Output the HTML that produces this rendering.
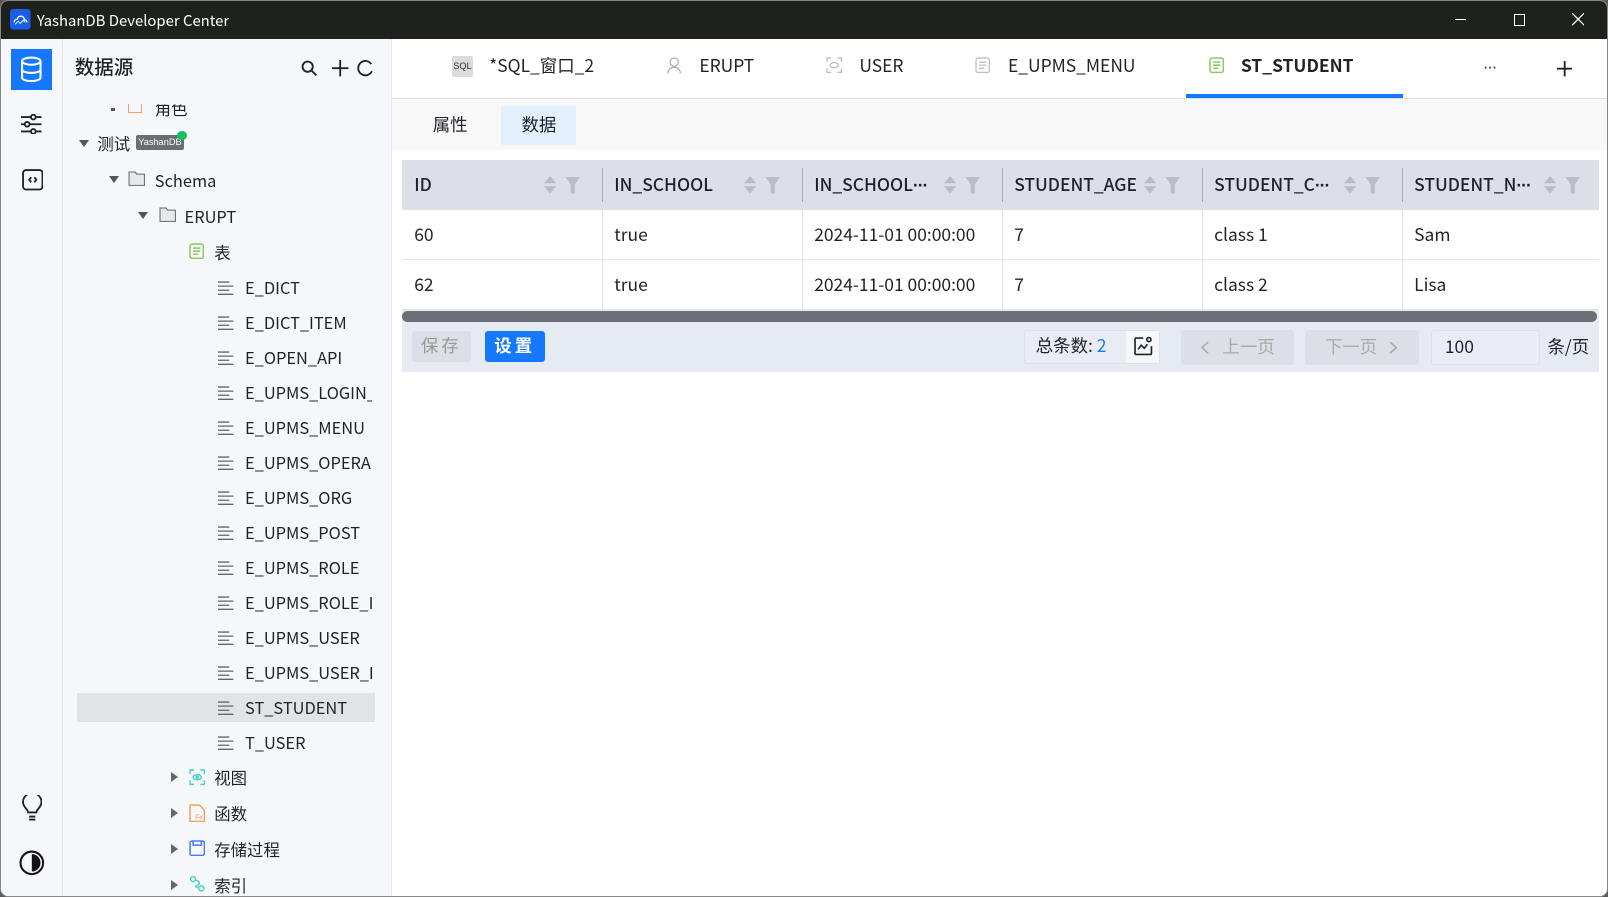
<!DOCTYPE html>
<html><head><meta charset="utf-8">
<style>
html{zoom:1.02551}
*{box-sizing:border-box;margin:0;padding:0}
body{width:1568px;height:875px;overflow:hidden;background:#5a5a5a;font-family:"Noto Sans CJK SC","Liberation Sans",sans-serif;color:#1f2329;position:relative}
.win{position:absolute;left:0;top:0;width:1568px;height:875px;background:#fff;border-radius:8px;overflow:hidden;border:1px solid #888}
.title{position:absolute;left:0;top:0;width:100%;height:37px;background:#1f211c;color:#fff;font-size:14.5px}
.abs{position:absolute}
.act{position:absolute;left:0;top:37px;width:60px;bottom:0;background:#f5f7fb;border-right:1px solid #e3e6eb}
.side{position:absolute;left:60px;top:37px;width:321px;bottom:0;background:#f5f7fb;border-right:1px solid #e3e6eb}
.t{position:absolute;font-size:16px;line-height:20px;white-space:nowrap;color:#1f2329}
.arr{position:absolute;width:0;height:0;border-left:5px solid transparent;border-right:5px solid transparent;border-top:7px solid #555}
.arrr{position:absolute;width:0;height:0;border-top:5px solid transparent;border-bottom:5px solid transparent;border-left:7px solid #666}
.main{position:absolute;left:381px;top:37px;right:0;bottom:0;background:#fff}
.tab{position:absolute;top:17px;font-size:17px;line-height:20px;color:#1f2329;white-space:nowrap}
.th{position:absolute;top:0;height:49px;line-height:49px;font-size:17px;padding-left:12px;font-weight:500;white-space:nowrap}
.td{position:absolute;height:48px;line-height:48px;font-size:17px;padding-left:12px}
.btn{position:absolute;font-size:17px;text-align:center;border-radius:3px}
.dots{font-family:"Liberation Sans",sans-serif;letter-spacing:-1px;font-weight:700}
</style></head><body>
<div class="win">
<div class="title">
 <svg class="abs" style="left:9px;top:8px" width="20" height="20" viewBox="0 0 20 20"><rect width="20" height="20" rx="3" fill="#1a5ee8"/><path d="M4 13c0-2 1.5-3 3-3 .5-2 2-3 3.5-3 2 0 3.5 1.5 3.5 3.5 1.3 0 2.5 1 2.5 2.5" stroke="#fff" stroke-width="1.3" fill="none"/><path d="M5 15l3-3 2 2 3-3 2 2" stroke="#cfe" stroke-width="1" fill="none"/></svg>
 <div class="abs" style="left:35px;top:9px">YashanDB Developer Center</div>
 <div class="abs" style="left:1418px;top:18px;width:11px;height:1px;background:#fff"></div>
 <div class="abs" style="left:1475px;top:13px;width:11px;height:11px;border:1px solid #fff"></div>
 <svg class="abs" style="left:1532px;top:12px" width="12" height="12"><path d="M0 0L12 12M12 0L0 12" stroke="#fff" stroke-width="1.2"/></svg>
</div>
<div class="act">
 <div class="abs" style="left:10px;top:10px;width:40px;height:40px;background:#1677ff"></div>
 <svg class="abs" style="left:18px;top:17px" width="24" height="26" viewBox="0 0 24 26" fill="none" stroke="#fff" stroke-width="2"><ellipse cx="12" cy="5" rx="9" ry="3.5"/><path d="M3 5v16c0 2 4 3.5 9 3.5s9-1.5 9-3.5V5M3 13c0 2 4 3.5 9 3.5s9-1.5 9-3.5"/></svg>
 <svg class="abs" style="left:19px;top:73px" width="22" height="20" viewBox="0 0 22 20" fill="none" stroke="#222" stroke-width="1.8"><path d="M1 3h20M1 10h20M1 17h20"/><circle cx="13" cy="3" r="2.3" fill="#f5f7fb"/><circle cx="7" cy="10" r="2.3" fill="#f5f7fb"/><circle cx="13" cy="17" r="2.3" fill="#f5f7fb"/></svg>
 <svg class="abs" style="left:20px;top:127px" width="21" height="21" viewBox="0 0 21 21" fill="none" stroke="#222" stroke-width="1.8"><rect x="1" y="1" width="19" height="19" rx="3"/><path d="M9 8l-2 2.5 2 2.5M12 8l2 2.5-2 2.5"/></svg>
 <svg class="abs" style="left:20px;top:737px" width="20" height="26" viewBox="0 0 20 26" fill="none" stroke="#222" stroke-width="1.8"><path d="M6 17c0-3-5-5-5-10a9 9 0 0118 0c0 5-5 7-5 10z"/><path d="M7 21h6M7 24h6"/></svg>
 <svg class="abs" style="left:18px;top:791px" width="25" height="25" viewBox="0 0 25 25"><circle cx="12.5" cy="12.5" r="11" fill="none" stroke="#111" stroke-width="2"/><path d="M12.5 4a8.5 8.5 0 010 17z" fill="#111"/></svg>
</div>
<div class="side">
 <div class="t" style="left:12px;top:15px;font-size:19px;line-height:24px;font-weight:500">数据源</div>
 <svg class="abs" style="left:233px;top:21px" width="16" height="16" fill="none" stroke="#222" stroke-width="1.8"><circle cx="6.5" cy="6.5" r="5"/><path d="M10 10l5 5"/></svg>
 <svg class="abs" style="left:263px;top:21px" width="16" height="16" stroke="#222" stroke-width="1.8"><path d="M8 0v16M0 8h16"/></svg>
 <svg class="abs" style="left:287px;top:21px" width="16" height="16" fill="none" stroke="#222" stroke-width="1.8"><path d="M14 4A7 7 0 1014.5 11"/></svg>
 <div class="abs" style="left:47px;top:67px;width:4px;height:3px;background:#555"></div>
 <div class="abs" style="left:64px;top:63px;width:14px;height:9px;border:1.5px solid #f0a060;border-top:none"></div>
 <div class="t" style="left:90px;top:58px;clip-path:inset(6px 0 0 0)">角色</div>
 <div class="arr" style="left:16px;top:99px"></div>
 <div class="t" style="left:34px;top:92px">测试</div>
 <div class="abs" style="left:72px;top:94px;width:46px;height:14px;background:#6b6e73;border-radius:2px;color:#fff;font-size:9px;line-height:14px;text-align:center;font-family:'Liberation Sans',sans-serif">YashanDB</div>
 <div class="abs" style="left:112px;top:90px;width:9px;height:9px;background:#18c05a;border-radius:50%"></div>
 <div class="arr" style="left:45px;top:134px"></div>
 <svg class="abs" style="left:64px;top:129px" width="17" height="15"><path d="M1 1h6l1.5 2H16v11H1z" fill="#e6e8ec" stroke="#666" stroke-width="1"/></svg>
 <div class="t" style="left:90px;top:128px">Schema</div>
 <div class="arr" style="left:74px;top:169px"></div>
 <svg class="abs" style="left:94px;top:164px" width="17" height="15"><path d="M1 1h6l1.5 2H16v11H1z" fill="#e6e8ec" stroke="#666" stroke-width="1"/></svg>
 <div class="t" style="left:119px;top:163px">ERUPT</div>
 <svg class="abs" style="left:123px;top:199px" width="15" height="16" fill="none" stroke="#8cc860" stroke-width="1.5"><rect x="1" y="1" width="13" height="14" rx="2"/><path d="M4 5h7M4 8h7M4 11h5"/></svg>
 <div class="t" style="left:148px;top:198px">表</div>
 <div class="abs" style="left:14px;top:638px;width:291px;height:28px;background:#e1e3e7"></div>
 <div id="tbls"></div>
 <div class="arrr" style="left:106px;top:715px"></div>
 <svg class="abs" style="left:123px;top:712px" width="16" height="16" fill="none" stroke="#4dd0c8" stroke-width="1.4"><path d="M1 5V1h4M11 1h4v4M15 11v4h-4M5 15H1v-4"/><ellipse cx="8" cy="8" rx="4" ry="2.5"/><circle cx="8" cy="8" r="1" fill="#4dd0c8"/></svg>
 <div class="t" style="left:148px;top:710px">视图</div>
 <div class="arrr" style="left:106px;top:750px"></div>
 <svg class="abs" style="left:123px;top:746px" width="17" height="18" fill="none" stroke="#f0a060" stroke-width="1.4"><path d="M1 1h9l5 5v11H1z"/><text x="6" y="15" font-size="7" fill="#f0a060" stroke="none" font-family="Liberation Sans">Fx</text></svg>
 <div class="t" style="left:148px;top:745px">函数</div>
 <div class="arrr" style="left:106px;top:785px"></div>
 <svg class="abs" style="left:123px;top:781px" width="16" height="16" fill="none" stroke="#4a7cf0" stroke-width="1.5"><rect x="1" y="1" width="14" height="14" rx="2"/><path d="M4 1v4h8V1"/></svg>
 <div class="t" style="left:148px;top:780px">存储过程</div>
 <div class="arrr" style="left:106px;top:820px"></div>
 <svg class="abs" style="left:123px;top:815px" width="16" height="17" fill="none" stroke="#4dd0c8" stroke-width="1.4"><circle cx="4" cy="4" r="2.5"/><circle cx="12" cy="13" r="2.5"/><path d="M6 5c5 1 5 4 2 5s-2 2 2 2"/></svg>
 <div class="t" style="left:148px;top:815px">索引</div>
</div>
<div class="main">
 <div class="abs" style="left:0;top:58px;width:100%;height:1px;background:#dcdfe4"></div>
 <div class="abs" style="left:59px;top:17px;width:20px;height:20px;background:#d9dbde;border-radius:2px;font-size:9px;line-height:20px;text-align:center;color:#333;font-family:'Liberation Sans',sans-serif">SQL</div>
 <div class="tab" style="left:95px">*SQL_窗口_2</div>
 <svg class="abs" style="left:268px;top:18px" width="14" height="16" fill="none" stroke="#aaa" stroke-width="1.2"><circle cx="7" cy="5" r="4"/><path d="M1 16c0-4 3-6 6-6s6 2 6 6"/></svg>
 <div class="tab" style="left:300px">ERUPT</div>
 <svg class="abs" style="left:423px;top:18px" width="16" height="16" fill="none" stroke="#bbb" stroke-width="1.2"><path d="M1 5V1h4M11 1h4v4M15 11v4h-4M5 15H1v-4"/><ellipse cx="8" cy="8" rx="4" ry="2.5"/></svg>
 <div class="tab" style="left:456px">USER</div>
 <svg class="abs" style="left:569px;top:18px" width="15" height="16" fill="none" stroke="#bbb" stroke-width="1.2"><rect x="1" y="1" width="13" height="14" rx="2"/><path d="M4 5h7M4 8h7M4 11h5"/></svg>
 <div class="tab" style="left:601px">E_UPMS_MENU</div>
 <svg class="abs" style="left:797px;top:18px" width="15" height="16" fill="none" stroke="#8cc860" stroke-width="1.5"><rect x="1" y="1" width="13" height="14" rx="2"/><path d="M4 5h7M4 8h7M4 11h5"/></svg>
 <div class="tab" style="left:828px;font-weight:700">ST_STUDENT</div>
 <div class="abs" style="left:775px;top:54px;width:211px;height:4px;background:#1677ff"></div>
 <div class="tab dots" style="left:1064px;top:18px;font-weight:400;font-size:16px">···</div>
 <svg class="abs" style="left:1136px;top:22px" width="15" height="15" stroke="#222" stroke-width="1.8"><path d="M7.5 0v15M0 7.5h15"/></svg>
 <div class="abs" style="left:0;top:59px;width:100%;height:49px;background:#f8f8f9"></div>
 <div class="abs" style="left:40px;top:73px;font-size:17px;line-height:22px">属性</div>
 <div class="abs" style="left:107px;top:65px;width:73px;height:38px;background:#e3f0fd;border-radius:2px;font-size:17px;line-height:38px;text-align:center">数据</div>
 <div id="tbl" class="abs" style="left:10px;top:118px;width:1167px;height:207px;background:#e6eaf1">
  <div class="abs" style="left:0;top:0;width:100%;height:49px;background:#dcdfe6"></div>
  <div class="abs" style="left:0;top:49px;width:100%;height:96px;background:#fff"></div>
  <div class="abs" style="left:0;top:97px;width:100%;height:1px;background:#e2e4e8"></div>
  <div class="abs" style="left:0;top:145px;width:100%;height:1px;background:#e2e4e8"></div>
  <div class="abs" style="left:0;top:147px;width:1165px;height:11px;background:#6b6e75;border-radius:6px"></div>
  <div class="btn" style="left:10px;top:167px;width:57px;height:30px;line-height:30px;background:#dcdfe5;color:#999;letter-spacing:3px">保存</div>
  <div class="btn" style="left:81px;top:167px;width:58px;height:30px;line-height:30px;background:#1677ff;color:#fff;font-weight:700;letter-spacing:3px">设置</div>
  <div class="abs" style="left:607px;top:166px;width:132px;height:33px;border:1px solid #dde1e7;border-radius:3px;background:#e9ecf2"></div>
  <div class="abs" style="left:618px;top:171px;font-size:17px;line-height:22px">总条数: <span style="color:#1677ff">2</span></div>
  <div class="abs" style="left:706px;top:167px;width:32px;height:31px;background:#f5f7fa"></div>
  <svg class="abs" style="left:713px;top:172px" width="20" height="20" fill="none" stroke="#222" stroke-width="1.6"><path d="M10 2H3a1 1 0 00-1 1v14a1 1 0 001 1h14a1 1 0 001-1v-7"/><circle cx="15.5" cy="3.5" r="2"/><path d="M5 13l3-4 3 3 3-4"/></svg>
  <div class="abs" style="left:760px;top:166px;width:110px;height:34px;background:#dcdfe5;border-radius:3px;color:#aaa;font-size:17px;line-height:34px;padding-left:40px">上一页</div>
  <svg class="abs" style="left:779px;top:177px" width="8" height="13" fill="none" stroke="#aaa" stroke-width="1.5"><path d="M7 1L1 6.5 7 12"/></svg>
  <div class="abs" style="left:881px;top:166px;width:111px;height:34px;background:#dcdfe5;border-radius:3px;color:#aaa;font-size:17px;line-height:34px;padding-left:19px">下一页</div>
  <svg class="abs" style="left:962px;top:177px" width="8" height="13" fill="none" stroke="#aaa" stroke-width="1.5"><path d="M1 1l6 5.5L1 12"/></svg>
  <div class="abs" style="left:1003px;top:166px;width:107px;height:34px;background:#e9ecf2;border:1px solid #dde1e7;border-radius:3px;font-size:17px;line-height:32px;padding-left:13px">100</div>
  <div class="abs" style="left:1117px;top:172px;font-size:17px;line-height:22px">条/页</div>
 </div>
</div>
</div>
<script>
var names=["E_DICT","E_DICT_ITEM","E_OPEN_API","E_UPMS_LOGIN_","E_UPMS_MENU","E_UPMS_OPERA","E_UPMS_ORG","E_UPMS_POST","E_UPMS_ROLE","E_UPMS_ROLE_I","E_UPMS_USER","E_UPMS_USER_I","ST_STUDENT","T_USER"];
var h="";names.forEach(function(n,i){var y=232+i*34.15;
h+='<svg class="abs" style="left:152px;top:'+(y+4)+'px" width="16" height="14" stroke="#666" stroke-width="1.3"><path d="M0 1h11M0 5h15M0 9h11M0 13h15"/></svg><div class="t" style="left:178px;top:'+y+'px;width:124px;overflow:hidden">'+n+'</div>';});
document.getElementById("tbls").outerHTML=h;
var D='<span class="dots">···</span>';
var cols=["ID","IN_SCHOOL","IN_SCHOOL"+D,"STUDENT_AGE","STUDENT_C"+D,"STUDENT_N"+D];
var r1=["60","true","2024-11-01 00:00:00","7","class 1","Sam"],r2=["62","true","2024-11-01 00:00:00","7","class 2","Lisa"];
var t="";cols.forEach(function(c,i){var x=i*195;
t+='<div class="th" style="left:'+x+'px">'+c+'</div>';
t+='<svg class="abs" style="left:'+(x+138)+'px;top:14px" width="36" height="22"><path d="M1 9l6-7 6 7zM1 12l6 7 6-7z" fill="#b8bcc4"/><path d="M22 3h14l-5 7v9h-4v-9z" fill="#b8bcc4"/></svg>';
if(i>0){t+='<div class="abs" style="left:'+x+'px;top:8px;width:1px;height:33px;background:#aab"></div><div class="abs" style="left:'+x+'px;top:49px;width:1px;height:96px;background:#e2e4e8"></div>';}
t+='<div class="td" style="left:'+x+'px;top:49px">'+r1[i]+'</div><div class="td" style="left:'+x+'px;top:98px">'+r2[i]+'</div>';});
document.getElementById("tbl").insertAdjacentHTML("beforeend",t);
</script>
</body></html>
